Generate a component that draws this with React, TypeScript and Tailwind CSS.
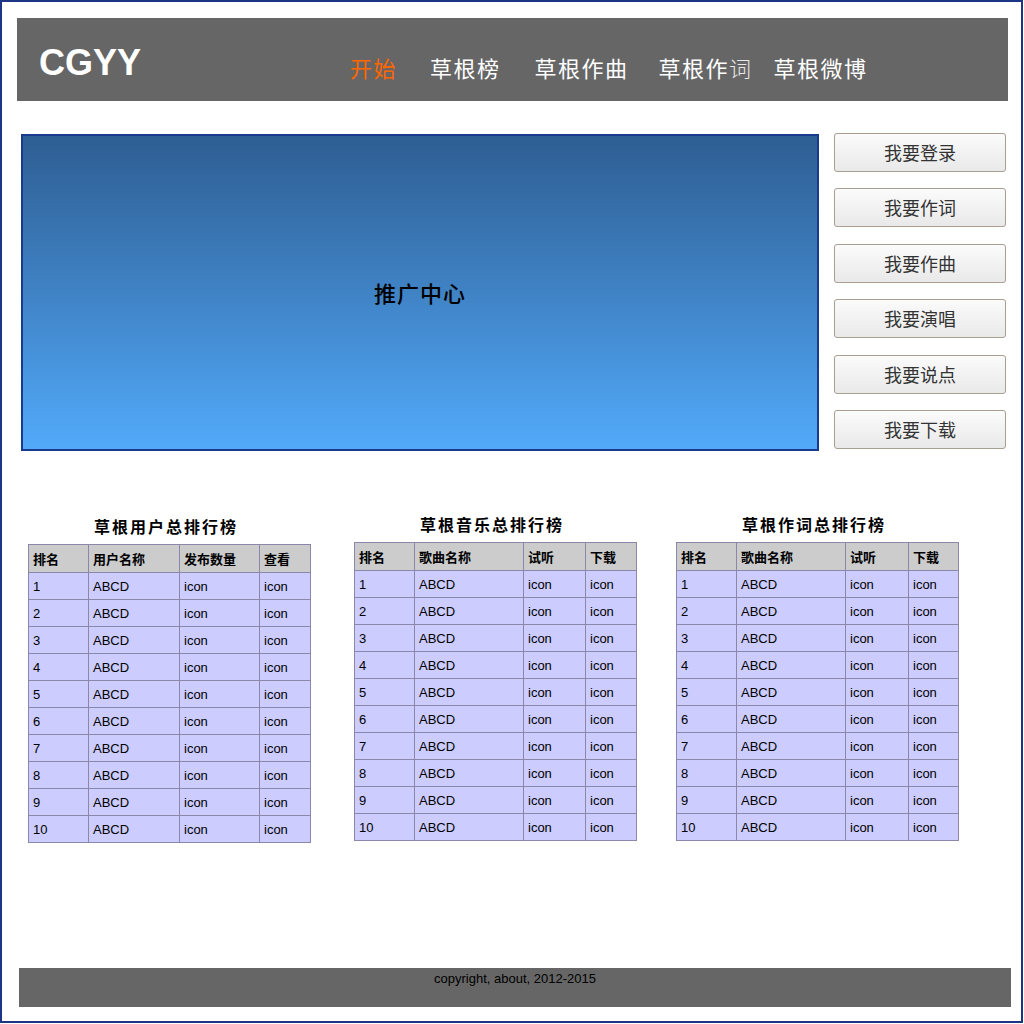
import React from 'react';

const NAV = [
  { label: '开始', ml: 'ml-0', active: true },
  { label: '草根榜', ml: 'ml-[33px]' },
  { label: '草根作曲', ml: 'ml-[34px]' },
  { label: '草根作词', ml: 'ml-[30px]' },
  { label: '草根微博', ml: 'ml-[21px]' },
];

const ACTIONS = ['我要登录', '我要作词', '我要作曲', '我要演唱', '我要说点', '我要下载'];

type Board = {
  title: string;
  heads: string[];
  cols: string[];
  wrap: string;
};

const BOARDS: Board[] = [
  {
    title: '草根用户总排行榜',
    heads: ['排名', '用户名称', '发布数量', '查看'],
    cols: ['w-[60px]', 'w-[91px]', 'w-[80px]', 'w-[51px]'],
    wrap: 'ml-[11px] mt-[2px]',
  },
  {
    title: '草根音乐总排行榜',
    heads: ['排名', '歌曲名称', '试听', '下载'],
    cols: ['w-[60px]', 'w-[109px]', 'w-[62px]', 'w-[51px]'],
    wrap: 'ml-[44px]',
  },
  {
    title: '草根作词总排行榜',
    heads: ['排名', '歌曲名称', '试听', '下载'],
    cols: ['w-[60px]', 'w-[109px]', 'w-[63px]', 'w-[50px]'],
    wrap: 'ml-[40px]',
  },
];

const ROWS = Array.from({ length: 10 }, (_, i) => i + 1);

const RankTable = ({ board }: { board: Board }) => (
  <div className={`flex flex-col w-[282px] ${board.wrap}`}>
    <div className="h-[20px] mb-[8px] pr-[6px] text-center text-[16px] font-bold leading-[20px] text-black font-['Noto_Sans_CJK_SC',sans-serif] tracking-[2px]">
      {board.title}
    </div>
    <table className="border-collapse w-[282px] table-fixed">
      <thead>
        <tr className="h-[28px] bg-[#cccccc]">
          {board.heads.map((h, i) => (
            <th
              key={h}
              className={`${board.cols[i]} border border-[#8a87a8] px-[4px] text-left text-[13px] font-bold text-black font-['Noto_Sans_CJK_SC',sans-serif]`}
            >
              {h}
            </th>
          ))}
        </tr>
      </thead>
      <tbody>
        {ROWS.map(n => (
          <tr key={n} className="h-[27px] bg-[#ccccff]">
            {[String(n), 'ABCD', 'icon', 'icon'].map((c, i) => (
              <td
                key={i}
                className="border border-[#8a87a8] px-[4px] pt-[2px] text-[13px] text-black font-['Liberation_Sans',Arial,sans-serif]"
              >
                {c}
              </td>
            ))}
          </tr>
        ))}
      </tbody>
    </table>
  </div>
);

export default function App() {
  return (
    <div className="w-[1023px] h-[1023px] border-2 border-[#1c3585] bg-white flex flex-col">
      {/* ── Header ── */}
      <div className="mt-[16px] ml-[15px] w-[991px] h-[83px] bg-[#666666] flex items-start">
        <div className="ml-[22px] mt-[27px] w-[311px] text-[36px] leading-none font-bold text-white font-['Liberation_Sans',Arial,sans-serif]">
          CGYY
        </div>
        <nav className="flex mt-[36px] text-[22px] leading-[26px] tracking-[1.5px] font-['Noto_Sans_CJK_SC',sans-serif]">
          {NAV.map(item => (
            <span
              key={item.label}
              className={`${item.ml} ${item.active ? 'text-[#ff6600]' : 'text-white'}`}
            >
              {item.label === '草根作词' ? (
                <>
                  草根作<span className="font-light text-[#e8e8e8]">词</span>
                </>
              ) : (
                item.label
              )}
            </span>
          ))}
        </nav>
      </div>

      {/* ── Promo + actions ── */}
      <div className="flex mt-[32px] ml-[19px]">
        <div className="w-[798px] h-[317px] mt-[1px] border-2 border-[#1a3a8e] bg-gradient-to-b from-[#2e5e93] to-[#52aafa] flex items-center justify-center">
          <span className="text-[22px] font-medium text-black font-['Noto_Sans_CJK_SC',sans-serif] tracking-[1px]">推广中心</span>
        </div>
        <div className="ml-[15px] flex flex-col gap-[16.4px]">
          {ACTIONS.map(a => (
            <button
              key={a}
              className="w-[172px] h-[39px] rounded-[3px] border border-[#a89e92] bg-gradient-to-b from-[#fbfbfb] to-[#e9e9e9] text-[18px] text-[#333333] font-['Noto_Sans_CJK_SC',sans-serif]"
            >
              {a}
            </button>
          ))}
        </div>
      </div>

      {/* ── Rankings ── */}
      <div className="flex items-start mt-[63px] ml-[15px]">
        {BOARDS.map(b => (
          <RankTable key={b.title} board={b} />
        ))}
      </div>

      {/* ── Footer ── */}
      <div className="mt-auto mb-[14px] ml-[17px] w-[992px] h-[39px] bg-[#666666] flex justify-center">
        <span className="mt-[3px] text-[13px] leading-[16px] text-black font-['Liberation_Sans',Arial,sans-serif]">
          copyright, about, 2012-2015
        </span>
      </div>
    </div>
  );
}
